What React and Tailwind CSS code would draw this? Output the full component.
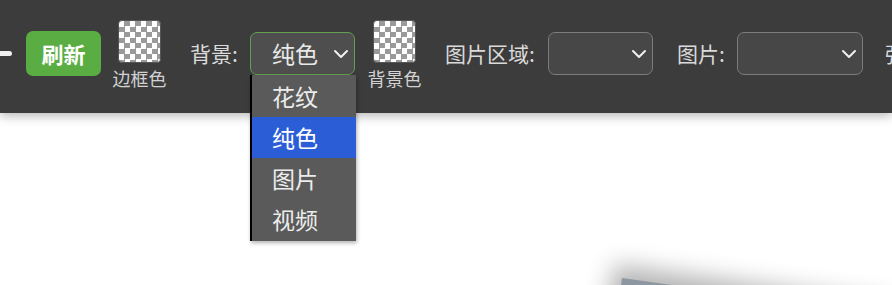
import { ChevronDown } from 'lucide-react';

const font = { fontFamily: '"Noto Sans CJK SC", "Noto Sans", sans-serif' };

function Swatch({ label }) {
    return (
        <div className="flex flex-col items-center w-[53px] shrink-0">
            <div className="w-[43px] h-[43px] rounded-[4px] bg-white bg-[conic-gradient(#9a9a9a_25%,#ffffff_0_50%,#9a9a9a_0_75%,#ffffff_0)] bg-[length:11px_11px] border border-[#555]" />
            <span className="mt-[3px] text-[18px] leading-[24px] text-[#d2d2d2]">{label}</span>
        </div>
    );
}

function Select({ value, active, width }) {
    return (
        <div
            className={`shrink-0 h-[43px] rounded-[7px] flex items-center justify-between pl-[21px] pr-[1px] ${active ? 'border border-[#62a050] bg-[#4e4e4e]' : 'border border-[#7c7c7c] bg-[#474747]'}`}
            style={{ width }}
        >
            <span className="text-[23px] text-[#e8e8e8]">{value}</span>
            <ChevronDown size={24} strokeWidth={2} className="text-[#f0f0f0]" />
        </div>
    );
}

export default function App() {
    return (
        <div className="relative w-[892px] h-[285px] overflow-hidden bg-white" style={font}>
            {/* toolbar */}
            <div className="h-[113px] bg-[#3c3c3c] flex items-center pb-[6px] shadow-[0_3px_10px_rgba(0,0,0,0.28)] relative z-10 whitespace-nowrap">
                <div className="shrink-0 w-[12px] h-[5px] bg-[#f0f0f0] rounded-r-full" />
                <button className="shrink-0 ml-[14px] w-[75px] h-[45px] rounded-[7px] bg-[#5aad43] text-white text-[22px] font-bold">
                    刷新
                </button>
                <div className="ml-[12px] pt-[3px]"><Swatch label="边框色" /></div>
                <span className="shrink-0 ml-[24px] text-[21px] text-[#dadada] w-[60px]">背景:</span>
                <Select value="纯色" active width={105} />
                <div className="ml-[13px] pt-[3px]"><Swatch label="背景色" /></div>
                <span className="shrink-0 ml-[24px] text-[21px] text-[#dadada] w-[103px]">图片区域:</span>
                <Select value="" width={105} />
                <span className="shrink-0 ml-[24px] text-[21px] text-[#dadada] w-[60px]">图片:</span>
                <Select value="" width={126} />
                <span className="shrink-0 ml-[22px] text-[21px] text-[#dadada]">强</span>
            </div>

            {/* open dropdown */}
            <div className="absolute z-20 left-[250px] top-[75px] w-[106px] bg-[#5a5a5a] border-l-2 border-black shadow-[1px_2px_4px_rgba(0,0,0,0.3)] py-[1px]">
                {['花纹', '纯色', '图片', '视频'].map((o) => (
                    <div
                        key={o}
                        className={`h-[41px] flex items-center pl-[20px] text-[23px] ${o === '纯色' ? 'bg-[#2b5ed6] text-white' : 'text-[#ececec]'}`}
                    >
                        {o}
                    </div>
                ))}
            </div>

            {/* tilted card on canvas */}
            <div className="absolute left-[622px] top-[278px] w-[320px] h-[120px] origin-top-left bg-[#8d97a1] rotate-[8deg] shadow-[0_-2px_24px_10px_rgba(0,0,0,0.3)]" />
        </div>
    );
}
